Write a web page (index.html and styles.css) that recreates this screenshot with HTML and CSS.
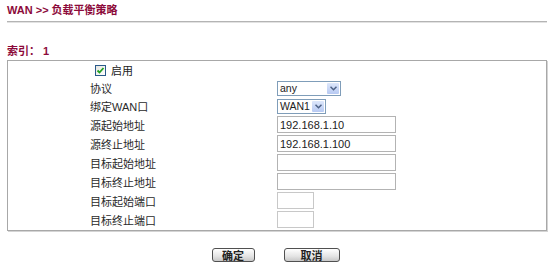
FILE: index.html
```html
<!DOCTYPE html>
<html lang="zh-CN">
<head>
    <meta charset="UTF-8">
    <title>WAN >> 负载平衡策略</title>
    <link rel="stylesheet" href="styles.css">
</head>
<body>
    <div class="page">
        <div class="title">WAN &gt;&gt; 负载平衡策略</div>
        <div class="rule"></div>
        <div class="index">索引： 1</div>
        <div class="panel">
            <div class="row row-short">
                <div class="label"></div>
                <div class="field">
                    <span class="check">
                        <svg width="9" height="9" viewBox="0 0 9 9"><path d="M1.5 4.5 L3.5 6.5 L7.5 2" fill="none" stroke="#21a121" stroke-width="1.8"/></svg>
                    </span>
                    <span class="check-text">启用</span>
                </div>
            </div>
            <div class="row row-short">
                <div class="label">协议</div>
                <div class="field">
                    <span class="select select-any"><span class="value">any</span><span class="arrow"><svg width="7" height="5" viewBox="0 0 7 5"><path d="M0.5 0.8 L3.5 3.8 L6.5 0.8" fill="none" stroke="#4d6185" stroke-width="1.5"/></svg></span></span>
                </div>
            </div>
            <div class="row row-short">
                <div class="label">绑定WAN口</div>
                <div class="field">
                    <span class="select select-wan"><span class="value">WAN1</span><span class="arrow"><svg width="7" height="5" viewBox="0 0 7 5"><path d="M0.5 0.8 L3.5 3.8 L6.5 0.8" fill="none" stroke="#4d6185" stroke-width="1.5"/></svg></span></span>
                </div>
            </div>
            <div class="row">
                <div class="label">源起始地址</div>
                <div class="field"><input class="text" type="text" value="192.168.1.10"></div>
            </div>
            <div class="row">
                <div class="label">源终止地址</div>
                <div class="field"><input class="text" type="text" value="192.168.1.100"></div>
            </div>
            <div class="row">
                <div class="label">目标起始地址</div>
                <div class="field"><input class="text" type="text" value=""></div>
            </div>
            <div class="row">
                <div class="label">目标终止地址</div>
                <div class="field"><input class="text" type="text" value=""></div>
            </div>
            <div class="row">
                <div class="label">目标起始端口</div>
                <div class="field"><input class="text port" type="text" value=""></div>
            </div>
            <div class="row">
                <div class="label">目标终止端口</div>
                <div class="field"><input class="text port" type="text" value=""></div>
            </div>
        </div>
        <div class="buttons">
            <button class="btn btn-ok">确定</button>
            <button class="btn btn-cancel">取消</button>
        </div>
    </div>
</body>
</html>
```

FILE: styles.css
```css
* {
    box-sizing: border-box;
}
body {
    margin: 0;
    padding: 0;
    background: #fff;
    color: #222;
    font-family: 'Liberation Sans', 'Noto Sans CJK SC', sans-serif;
    font-size: 11px;
}
.page {
    width: 552px;
    padding: 0 5px 0 7px;
}
.title {
    height: 21px;
    line-height: 20px;
    font-weight: bold;
    color: #8c0a3a;
}
.rule {
    height: 2px;
    border-top: 1px solid #b4b4b4;
    border-bottom: 1px solid #e2e2e2;
}
.index {
    margin-top: 20px;
    height: 17px;
    line-height: 16px;
    font-weight: bold;
    color: #8c0a3a;
}
.panel {
    border: 1px solid #a8a8a8;
    box-shadow: 1px 1px 0 #d4d4d4;
    padding: 0 0 1px 0;
}
.row {
    display: flex;
    align-items: center;
    height: 19px;
}
.row-short {
    height: 18px;
}
.label {
    width: 269px;
    padding-left: 82px;
    color: #2a2a2a;
}
.field {
    display: flex;
    align-items: center;
}
.row-short:first-child .field {
    margin-left: -182px;
}
.check {
    display: inline-flex;
    align-items: center;
    justify-content: center;
    width: 11px;
    height: 11px;
    border: 1px solid #2a5a8a;
    background: linear-gradient(135deg, #e6e6e0, #ffffff);
}
.check-text {
    margin-left: 5px;
}
.select {
    display: inline-flex;
    align-items: center;
    height: 15px;
    border: 1px solid #7f9db9;
    background: #fff;
    padding: 1px;
}
.select-any {
    width: 64px;
}
.select-wan {
    width: 49px;
}
.select .value {
    flex: 1;
    padding-left: 1px;
    color: #222;
    font-size: 10.5px;
    line-height: 12px;
    white-space: nowrap;
    overflow: hidden;
}
.select .arrow {
    display: inline-flex;
    align-items: center;
    justify-content: center;
    flex: none;
    width: 12px;
    height: 11px;
    background: linear-gradient(#dde7fb, #b7c9f2);
    border-radius: 1px;
}
.text {
    width: 119px;
    height: 17px;
    border: 1px solid #b3b3b3;
    padding: 0 2px;
    margin: 0;
    font-family: 'Liberation Sans', sans-serif;
    font-size: 11px;
    color: #222;
    background: #fff;
    outline: none;
}
.port {
    width: 37px;
    border-color: #c8c8c8;
}
.buttons {
    display: flex;
    justify-content: center;
    gap: 29px;
    padding-top: 17px;
    margin-left: -3px;
}
.btn {
    height: 14px;
    padding: 0;
    border: 1px solid #505050;
    border-radius: 3px;
    background: linear-gradient(#ffffff, #e4e4e4 60%, #c8c8c8);
    font-family: 'Noto Sans CJK SC', sans-serif;
    font-size: 11px;
    font-weight: bold;
    line-height: 11px;
    color: #222;
}
.btn-ok {
    width: 43px;
}
.btn-cancel {
    width: 56px;
}
```
